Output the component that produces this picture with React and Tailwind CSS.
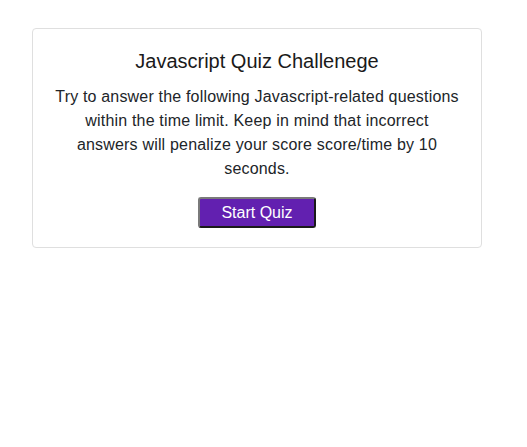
export default function App() {
  return (
    <div className="min-h-[447px] bg-white pt-[28px] px-[32px]" style={{ fontFamily: '"Liberation Sans", Arial, sans-serif' }}>
      <div className="w-[450px] border border-[#dfdfdf] rounded-[4px] pt-[20px] pb-[19px] px-[16px] flex flex-col items-center text-[#212529]">
        <h1 className="text-[20px] leading-[24px] font-medium text-[#1a1a1a]">Javascript Quiz Challenege</h1>
        <p className="mt-[12px] w-[408px] text-[16px] leading-[24px] tracking-[0.18px] text-center">
          Try to answer the following Javascript-related questions within the time limit. Keep in mind that incorrect answers will penalize your score score/time by 10 seconds.
        </p>
        <button className="mt-[16px] w-[118px] h-[31px] rounded-[3px] bg-[#6220b0] text-white text-[16px] leading-[20px] border-2 border-t-[#7a7a7a] border-l-[#7a7a7a] border-b-[#1a1a1a] border-r-[#1a1a1a]">
          Start Quiz
        </button>
      </div>
    </div>
  );
}
